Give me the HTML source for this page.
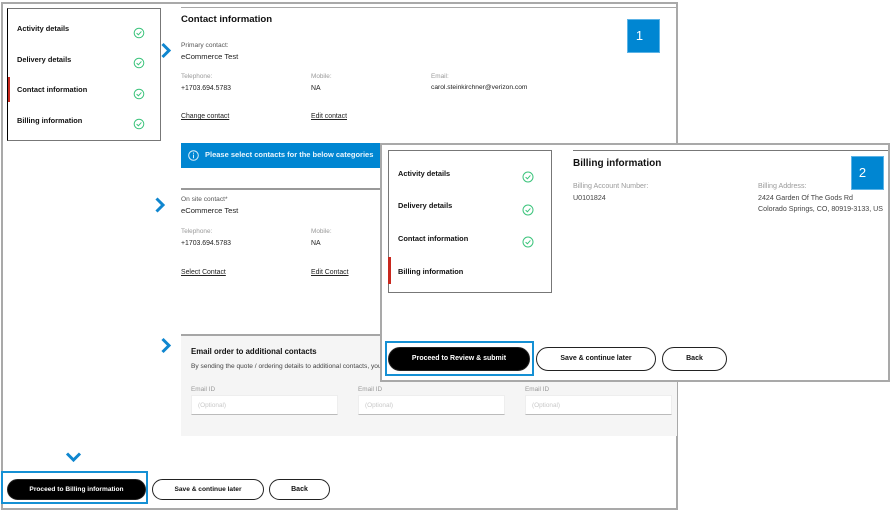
<!DOCTYPE html>
<html>
<head>
<meta charset="utf-8">
<style>
html,body{margin:0;padding:0;background:#fff;}
body{width:891px;height:511px;position:relative;overflow:hidden;font-family:"Liberation Sans",sans-serif;color:#111;}
.a{position:absolute;box-sizing:border-box;}
.t{position:absolute;white-space:nowrap;line-height:12px;height:12px;font-size:6.9px;color:#222;margin-top:1px;}
.b{font-weight:bold;color:#111;font-size:7.4px;}
.g{color:#9a9a9a;font-size:6.4px;}
.u{text-decoration:underline;color:#222;}
.btn{position:absolute;box-sizing:border-box;border:1px solid #222;border-radius:12px;background:#fff;text-align:center;font-weight:bold;font-size:7px;color:#111;}
.btn.k{background:#000;color:#fff;}
svg{position:absolute;overflow:visible;}
</style>
</head>
<body>
<!-- Frame 1 -->
<div class="a" style="left:1px;top:2px;width:677px;height:508px;border:2px solid #a9a9a9;"></div>
<div class="a" style="left:181px;top:7px;width:496px;height:1px;background:#a8a8a8;"></div>

<!-- Sidebar 1 -->
<div class="a" style="left:7px;top:8px;width:154px;height:133px;border:1px solid #777;border-left:1px solid #000;background:#fff;"></div>
<div class="a" style="left:8px;top:77px;width:2px;height:25px;background:#c8281e;"></div>
<div class="t b" style="left:17px;top:22px;">Activity details</div>
<div class="t b" style="left:17px;top:53px;">Delivery details</div>
<div class="t b" style="left:17px;top:83px;">Contact information</div>
<div class="t b" style="left:17px;top:114px;">Billing information</div>
<svg style="left:133px;top:27px" width="12" height="12" viewBox="0 0 12 12"><circle cx="6" cy="6" r="4.8" fill="none" stroke="#3cc47c" stroke-width="1"/><path d="M3.6 6.1 5.4 7.8 8.4 4.4" fill="none" stroke="#3cc47c" stroke-width="1"/></svg>
<svg style="left:133px;top:57px" width="12" height="12" viewBox="0 0 12 12"><circle cx="6" cy="6" r="4.8" fill="none" stroke="#3cc47c" stroke-width="1"/><path d="M3.6 6.1 5.4 7.8 8.4 4.4" fill="none" stroke="#3cc47c" stroke-width="1"/></svg>
<svg style="left:133px;top:88px" width="12" height="12" viewBox="0 0 12 12"><circle cx="6" cy="6" r="4.8" fill="none" stroke="#3cc47c" stroke-width="1"/><path d="M3.6 6.1 5.4 7.8 8.4 4.4" fill="none" stroke="#3cc47c" stroke-width="1"/></svg>
<svg style="left:133px;top:118px" width="12" height="12" viewBox="0 0 12 12"><circle cx="6" cy="6" r="4.8" fill="none" stroke="#3cc47c" stroke-width="1"/><path d="M3.6 6.1 5.4 7.8 8.4 4.4" fill="none" stroke="#3cc47c" stroke-width="1"/></svg>

<!-- Blue chevrons -->
<svg style="left:161px;top:43px" width="11" height="15" viewBox="0 0 11 15"><path d="M1.5 1 8 7.5 1.5 14" fill="none" stroke="#0f86cf" stroke-width="3"/></svg>
<svg style="left:155px;top:198px" width="11" height="15" viewBox="0 0 11 15"><path d="M1.5 .5 8 7 1.5 13.5" fill="none" stroke="#0f86cf" stroke-width="3"/></svg>
<svg style="left:161px;top:338px" width="11" height="15" viewBox="0 0 11 15"><path d="M1.5 1 8 7.5 1.5 14" fill="none" stroke="#0f86cf" stroke-width="3"/></svg>
<svg style="left:66px;top:452px" width="15" height="10" viewBox="0 0 15 10"><path d="M1 1.5 7.5 8 14 1.5" fill="none" stroke="#0f86cf" stroke-width="3"/></svg>

<!-- Contact info -->
<div class="t" style="left:181px;top:13px;font-size:9.6px;font-weight:bold;color:#111;">Contact information</div>
<div class="t" style="left:181px;top:39px;font-size:6.6px;color:#555;">Primary contact:</div>
<div class="t" style="left:181px;top:50px;font-size:7.6px;color:#222;">eCommerce Test</div>
<div class="t g" style="left:181px;top:70px;">Telephone:</div>
<div class="t" style="left:181px;top:82px;">+1703.694.5783</div>
<div class="t g" style="left:311px;top:70px;">Mobile:</div>
<div class="t" style="left:311px;top:82px;">NA</div>
<div class="t g" style="left:431px;top:70px;">Email:</div>
<div class="t" style="left:431px;top:81px;font-size:6.65px;">carol.steinkirchner@verizon.com</div>
<div class="t u" style="left:181px;top:110px;">Change contact</div>
<div class="t u" style="left:311px;top:110px;">Edit contact</div>
<div class="a" style="left:627px;top:19px;width:33px;height:34px;background:#0086d2;border:1px solid #5cb3e6;"></div>
<div class="t" style="left:627px;top:28px;width:25px;text-align:center;font-size:13px;line-height:14px;height:14px;color:#fff;">1</div>

<!-- Banner -->
<div class="a" style="left:181px;top:143px;width:199px;height:25px;background:#0086d2;"></div>
<svg style="left:187px;top:149px" width="13" height="13" viewBox="0 0 13 13"><circle cx="6.5" cy="6.5" r="4.8" fill="none" stroke="#d8eefa" stroke-width="1"/><path d="M6.5 5.6V9.2M6.5 3.6V4.7" stroke="#d8eefa" stroke-width="1"/></svg>
<div class="t" style="left:205px;top:148px;font-size:7.5px;font-weight:bold;color:#e8f5fd;">Please select contacts for the below categories</div>

<!-- On site -->
<div class="a" style="left:181px;top:188px;width:199px;height:2px;background:#999;"></div>
<div class="t" style="left:181px;top:193px;font-size:6.6px;color:#555;">On site contact*</div>
<div class="t" style="left:181px;top:204px;font-size:7.6px;color:#222;">eCommerce Test</div>
<div class="t g" style="left:181px;top:225px;">Telephone:</div>
<div class="t" style="left:181px;top:237px;">+1703.694.5783</div>
<div class="t g" style="left:311px;top:225px;">Mobile:</div>
<div class="t" style="left:311px;top:237px;">NA</div>
<div class="t u" style="left:181px;top:266px;">Select Contact</div>
<div class="t u" style="left:311px;top:266px;">Edit Contact</div>

<!-- Email section -->
<div class="a" style="left:181px;top:336px;width:496px;height:100px;background:#f5f5f5;"></div>
<div class="a" style="left:181px;top:334px;width:496px;height:2px;background:#a6a6a6;"></div>
<div class="t" style="left:191px;top:345px;font-size:7.8px;font-weight:bold;color:#111;">Email order to additional contacts</div>
<div class="t" style="left:191px;top:360px;font-size:6.6px;color:#444;">By sending the quote / ordering details to additional contacts, you agree</div>
<div class="t g" style="left:191px;top:383px;">Email ID</div>
<div class="t g" style="left:358px;top:383px;">Email ID</div>
<div class="t g" style="left:525px;top:383px;">Email ID</div>
<div class="a" style="left:191px;top:395px;width:147px;height:20px;background:#fff;border:1px solid #eee;border-bottom:1px solid #bbb;"></div>
<div class="a" style="left:358px;top:395px;width:147px;height:20px;background:#fff;border:1px solid #eee;border-bottom:1px solid #bbb;"></div>
<div class="a" style="left:525px;top:395px;width:147px;height:20px;background:#fff;border:1px solid #eee;border-bottom:1px solid #bbb;"></div>
<div class="t" style="left:198px;top:399px;font-size:6.4px;color:#c8c8c8;">(Optional)</div>
<div class="t" style="left:365px;top:399px;font-size:6.4px;color:#c8c8c8;">(Optional)</div>
<div class="t" style="left:532px;top:399px;font-size:6.4px;color:#c8c8c8;">(Optional)</div>

<!-- Buttons 1 -->
<div class="a" style="left:1px;top:471px;width:147px;height:33px;border:2px solid #1590d4;"></div>
<div class="btn k" style="left:7px;top:479px;width:139px;height:21px;line-height:19px;font-size:6.6px;">Proceed to Billing information</div>
<div class="btn" style="left:152px;top:479px;width:112px;height:21px;line-height:19px;font-size:6.6px;">Save &amp; continue later</div>
<div class="btn" style="left:269px;top:479px;width:61px;height:21px;line-height:19px;">Back</div>

<!-- Frame 2 -->
<div class="a" style="left:380px;top:143px;width:510px;height:239px;background:#fff;border:2px solid #a9a9a9;"></div>
<div class="a" style="left:573px;top:150px;width:315px;height:1px;background:#777;"></div>
<div class="a" style="left:388px;top:150px;width:164px;height:143px;border:1px solid #777;background:#fff;"></div>
<div class="a" style="left:388px;top:257px;width:3px;height:27px;background:#c8281e;"></div>
<div class="t b" style="left:398px;top:167px;">Activity details</div>
<div class="t b" style="left:398px;top:199px;">Delivery details</div>
<div class="t b" style="left:398px;top:232px;">Contact information</div>
<div class="t b" style="left:398px;top:265px;">Billing information</div>
<svg style="left:522px;top:171px" width="12" height="12" viewBox="0 0 12 12"><circle cx="6" cy="6" r="5" fill="none" stroke="#3cc47c" stroke-width="1"/><path d="M3.6 6.1 5.4 7.8 8.4 4.4" fill="none" stroke="#3cc47c" stroke-width="1"/></svg>
<svg style="left:522px;top:204px" width="12" height="12" viewBox="0 0 12 12"><circle cx="6" cy="6" r="5" fill="none" stroke="#3cc47c" stroke-width="1"/><path d="M3.6 6.1 5.4 7.8 8.4 4.4" fill="none" stroke="#3cc47c" stroke-width="1"/></svg>
<svg style="left:522px;top:236px" width="12" height="12" viewBox="0 0 12 12"><circle cx="6" cy="6" r="5" fill="none" stroke="#3cc47c" stroke-width="1"/><path d="M3.6 6.1 5.4 7.8 8.4 4.4" fill="none" stroke="#3cc47c" stroke-width="1"/></svg>

<div class="t" style="left:573px;top:157px;font-size:10px;font-weight:bold;color:#111;">Billing information</div>
<div class="t g" style="left:573px;top:179px;font-size:7.1px;">Billing Account Number:</div>
<div class="t" style="left:573px;top:191px;font-size:7.1px;color:#444;">U0101824</div>
<div class="t g" style="left:758px;top:179px;font-size:7.1px;">Billing Address:</div>
<div class="t" style="left:758px;top:191px;font-size:7.1px;color:#444;">2424 Garden Of The Gods Rd</div>
<div class="t" style="left:758px;top:202px;font-size:7.1px;color:#444;">Colorado Springs, CO, 80919-3133, US</div>
<div class="a" style="left:851px;top:156px;width:33px;height:34px;background:#0086d2;border:1px solid #5cb3e6;"></div>
<div class="t" style="left:850px;top:165px;width:25px;text-align:center;font-size:13px;line-height:14px;height:14px;color:#fff;">2</div>

<!-- Buttons 2 -->
<div class="a" style="left:385px;top:341px;width:149px;height:35px;border:2px solid #1590d4;"></div>
<div class="btn k" style="left:388px;top:347px;width:142px;height:24px;line-height:22px;">Proceed to Review &amp; submit</div>
<div class="btn" style="left:536px;top:347px;width:120px;height:24px;line-height:22px;">Save &amp; continue later</div>
<div class="btn" style="left:662px;top:347px;width:65px;height:24px;line-height:22px;">Back</div>
</body>
</html>
